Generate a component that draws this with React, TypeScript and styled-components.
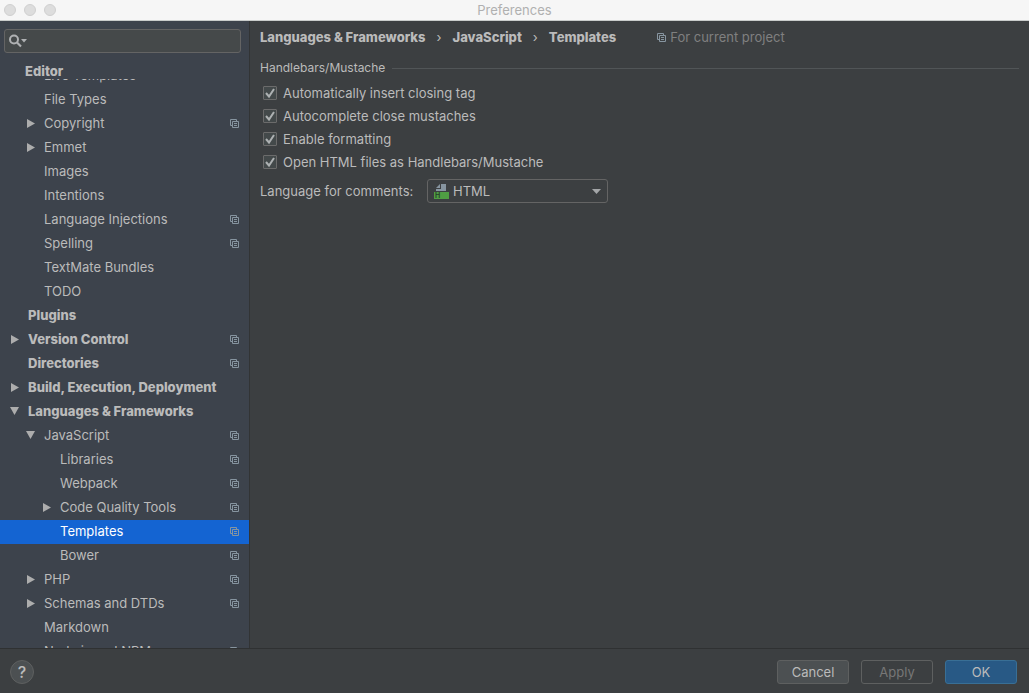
import React from "react";
import styled, { createGlobalStyle, css } from "styled-components";

const GlobalStyle = createGlobalStyle`
  *, *::before, *::after { box-sizing: border-box; }
  body { margin: 0; background: #3c3f41; }
  body, button, input, select {
    font-family: Inter, Roboto, "Liberation Sans", sans-serif;
    font-size: 13px;
    line-height: 16px;
    color: #bbbbbb;
  }
  button, input, select { margin: 0; padding: 0; }
`;

const Window = styled.div`
  display: flex;
  flex-direction: column;
  height: 100vh;
  background: #3c3f41;
`;

const TitleBar = styled.header`
  display: grid;
  grid-template-columns: 1fr auto 1fr;
  align-items: center;
  flex: none;
  height: 21px;
  padding: 0 4px;
  background: #f6f6f6;
  border-bottom: 1px solid #c9cccb;
`;

const WindowControls = styled.div`
  display: flex;
  gap: 8px;
`;

const WindowDot = styled.button`
  width: 12px;
  height: 12px;
  border: 1px solid #d0d0d0;
  border-radius: 50%;
  background: #dddddd;
`;

const WindowTitle = styled.h1`
  margin: 0;
  font-size: 13px;
  font-weight: 400;
  color: #b0b0b0;
`;

const Body = styled.div`
  display: flex;
  flex: 1;
  min-height: 0;
`;

const Sidebar = styled.nav`
  display: flex;
  flex-direction: column;
  flex: none;
  width: 250px;
  background: #3d434c;
  border-right: 1px solid #323435;
`;

const SearchBox = styled.div`
  display: flex;
  align-items: center;
  gap: 4px;
  flex: none;
  height: 24px;
  margin: 8px 8px 0 4px;
  padding: 0 4px;
  background: #45494a;
  border: 1px solid #646464;
  border-radius: 3px;
`;

const SearchInput = styled.input`
  flex: 1;
  min-width: 0;
  border: 0;
  outline: 0;
  background: transparent;
`;

const StickyGroup = styled.div`
  flex: none;
  height: 26px;
  padding: 10px 0 0 25px;
  font-weight: 800;
`;

const TreeViewport = styled.div`
  flex: 1;
  min-height: 0;
  overflow: hidden;
`;

const TreeList = styled.ul`
  margin: -15px 0 0;
  padding: 0;
  list-style: none;
`;

const TreeRow = styled.button<{ $level: number; $selected?: boolean }>`
  display: flex;
  align-items: center;
  width: 100%;
  height: 24px;
  padding: 0 10px 2px ${(p) => 8 + p.$level * 16}px;
  border: 0;
  background: transparent;
  text-align: left;
  font-weight: ${(p) => (p.$level === 0 ? 800 : 400)};
  ${(p) =>
    p.$selected &&
    css`
      background: #1464d2;
      color: #ffffff;
    `}
`;

const ArrowSlot = styled.span`
  display: flex;
  align-items: center;
  justify-content: center;
  flex: none;
  width: 13px;
  margin-right: 7px;
`;

const RowLabel = styled.span`
  flex: 1;
  white-space: nowrap;
`;

const Content = styled.main`
  flex: 1;
  min-width: 0;
  padding: 8px 10px;
`;

const Breadcrumbs = styled.div`
  display: flex;
  align-items: center;
  height: 16px;
  font-weight: 800;
  white-space: nowrap;
`;

const Separator = styled.span`
  width: 27px;
  text-align: center;
  font-weight: 400;
`;

const Scope = styled.span`
  display: flex;
  align-items: center;
  gap: 4px;
  margin-left: 41px;
  font-weight: 400;
  color: #808080;
`;

const Group = styled.fieldset`
  min-width: 0;
  margin: 0;
  padding: 0;
  border: 0;
`;

const GroupTitle = styled.legend`
  display: flex;
  align-items: center;
  gap: 7px;
  width: 100%;
  padding: 15px 0 5px;
  font-size: 12px;
  line-height: 16px;

  &::after {
    content: "";
    flex: 1;
    height: 1px;
    background: #515557;
  }
`;

const CheckRow = styled.label`
  display: flex;
  align-items: center;
  gap: 6px;
  width: max-content;
  height: 23px;
  padding-left: 3px;
`;

const CheckMark = styled.span`
  display: grid;
  place-items: center;

  > * { grid-area: 1 / 1; }
  svg { pointer-events: none; visibility: hidden; }
  input:checked + svg { visibility: visible; }
`;

const CheckInput = styled.input`
  appearance: none;
  width: 14px;
  height: 14px;
  background: #43494a;
  border: 1px solid #6b6b6b;
  border-radius: 1px;
`;

const FieldRow = styled.div`
  display: flex;
  align-items: center;
  margin-top: 6px;
`;

const FieldLabel = styled.label`
  width: 167px;
`;

const SelectBox = styled.div`
  display: grid;
  align-items: center;
  width: 181px;

  > * { grid-area: 1 / 1; }
  svg { pointer-events: none; z-index: 1; }
`;

const Select = styled.select`
  appearance: none;
  width: 100%;
  height: 24px;
  padding: 0 24px 0 25px;
  background: #3c3f41;
  border: 1px solid #646464;
  border-radius: 3px;
`;

const StartIcon = styled.svg`
  justify-self: start;
  margin-left: 7px;
`;

const EndIcon = styled.svg`
  justify-self: end;
  margin-right: 7px;
`;

const Footer = styled.footer`
  display: flex;
  align-items: center;
  gap: 12px;
  flex: none;
  height: 45px;
  padding: 2px 12px 0 10px;
  border-top: 1px solid #2f3132;
`;

const HelpButton = styled.button`
  width: 24px;
  height: 24px;
  margin-right: auto;
  border: 1px solid #5e6060;
  border-radius: 50%;
  background: #4c5052;
  font-size: 16px;
  font-weight: 500;
`;

const DialogButton = styled.button<{ $kind?: "default" | "primary" }>`
  width: 72px;
  height: 24px;
  border: 1px solid ${(p) => (p.$kind === "primary" ? "#396f95" : "#5e6060")};
  border-radius: 3px;
  background: ${(p) => (p.$kind === "primary" ? "#285985" : "#4c5052")};

  &:disabled {
    background: transparent;
    color: #777777;
  }
`;

function CopyIcon() {
  return (
    <svg width="9" height="9" viewBox="0 0 9 9" fill="none" stroke="#8795a0" aria-hidden="true">
      <path d="M2.5 6.5H.5V.5h6v2" />
      <path d="M2.5 2.5h6v6h-6z" />
      <path d="M4 4.5h3M4 6.5h3" />
    </svg>
  );
}

function Arrow({ open }: { open: boolean }) {
  return open ? (
    <svg width="9" height="8" viewBox="0 0 9 8" fill="#adadad" aria-hidden="true">
      <path d="M0 0h9L4.500 8z" />
    </svg>
  ) : (
    <svg width="8" height="9" viewBox="0 0 8 9" fill="#adadad" aria-hidden="true">
      <path d="M0 0v9l8-4.500z" />
    </svg>
  );
}

type Item = { label: string; level: number; arrow?: "open" | "closed"; project?: boolean; selected?: boolean };

const items: Item[] = [
  { label: "Live Templates", level: 1 },
  { label: "File Types", level: 1 },
  { label: "Copyright", level: 1, arrow: "closed", project: true },
  { label: "Emmet", level: 1, arrow: "closed" },
  { label: "Images", level: 1 },
  { label: "Intentions", level: 1 },
  { label: "Language Injections", level: 1, project: true },
  { label: "Spelling", level: 1, project: true },
  { label: "TextMate Bundles", level: 1 },
  { label: "TODO", level: 1 },
  { label: "Plugins", level: 0 },
  { label: "Version Control", level: 0, arrow: "closed", project: true },
  { label: "Directories", level: 0, project: true },
  { label: "Build, Execution, Deployment", level: 0, arrow: "closed" },
  { label: "Languages & Frameworks", level: 0, arrow: "open" },
  { label: "JavaScript", level: 1, arrow: "open", project: true },
  { label: "Libraries", level: 2, project: true },
  { label: "Webpack", level: 2, project: true },
  { label: "Code Quality Tools", level: 2, arrow: "closed", project: true },
  { label: "Templates", level: 2, project: true, selected: true },
  { label: "Bower", level: 2, project: true },
  { label: "PHP", level: 1, arrow: "closed", project: true },
  { label: "Schemas and DTDs", level: 1, arrow: "closed", project: true },
  { label: "Markdown", level: 1 },
  { label: "Node.js and NPM", level: 1, project: true },
];

const options = [
  "Automatically insert closing tag",
  "Autocomplete close mustaches",
  "Enable formatting",
  "Open HTML files as Handlebars/Mustache",
];

export default function App() {
  return (
    <>
      <GlobalStyle />
      <Window>
        <TitleBar>
          <WindowControls>
            <WindowDot aria-label="Close" />
            <WindowDot aria-label="Minimize" />
            <WindowDot aria-label="Zoom" />
          </WindowControls>
          <WindowTitle>Preferences</WindowTitle>
        </TitleBar>
        <Body>
          <Sidebar>
            <SearchBox>
              <svg width="19" height="14" viewBox="0 0 19 14" fill="none" aria-hidden="true">
                <circle cx="5" cy="5.500" r="4" stroke="#afb1b3" strokeWidth="2" />
                <path d="M8 8.500l4 4" stroke="#afb1b3" strokeWidth="2.200" />
                <path d="M12 5h6l-3 3.500z" fill="#afb1b3" />
              </svg>
              <SearchInput type="text" aria-label="Search settings" />
            </SearchBox>
            <StickyGroup>Editor</StickyGroup>
            <TreeViewport>
              <TreeList>
                {items.map((item) => (
                  <li key={item.label}>
                    <TreeRow
                      $level={item.level}
                      $selected={item.selected}
                      aria-expanded={item.arrow ? item.arrow === "open" : undefined}
                    >
                      <ArrowSlot>{item.arrow && <Arrow open={item.arrow === "open"} />}</ArrowSlot>
                      <RowLabel>{item.label}</RowLabel>
                      {item.project && <CopyIcon />}
                    </TreeRow>
                  </li>
                ))}
              </TreeList>
            </TreeViewport>
          </Sidebar>
          <Content>
            <Breadcrumbs>
              <span>Languages &amp; Frameworks</span>
              <Separator>›</Separator>
              <span>JavaScript</span>
              <Separator>›</Separator>
              <span>Templates</span>
              <Scope>
                <CopyIcon />
                For current project
              </Scope>
            </Breadcrumbs>
            <Group>
              <GroupTitle>Handlebars/Mustache</GroupTitle>
              {options.map((label) => (
                <CheckRow key={label}>
                  <CheckMark>
                    <CheckInput type="checkbox" defaultChecked />
                    <svg width="14" height="14" viewBox="0 0 14 14" fill="none" aria-hidden="true">
                      <path d="M3 7l3 3.500L11 3" stroke="#adb1b2" strokeWidth="2" />
                    </svg>
                  </CheckMark>
                  {label}
                </CheckRow>
              ))}
              <FieldRow>
                <FieldLabel htmlFor="comment-language">Language for comments:</FieldLabel>
                <SelectBox>
                  <Select id="comment-language" defaultValue="HTML">
                    <option>HTML</option>
                  </Select>
                  <StartIcon width="15" height="15" viewBox="0 0 15 15" aria-hidden="true">
                    <path d="M7 0h5v7H2V5h5z" fill="#8795a0" />
                    <path d="M6 0v4H2z" fill="#8795a0" />
                    <path d="M0 8h15v7H0z" fill="#4f9e43" />
                    <text x="1" y="14" fontSize="7" fontWeight="600" fill="#26402a">
                      H
                    </text>
                  </StartIcon>
                  <EndIcon width="9" height="5" viewBox="0 0 9 5" aria-hidden="true">
                    <path d="M0 0h9L4.500 5z" fill="#a4a6a8" />
                  </EndIcon>
                </SelectBox>
              </FieldRow>
            </Group>
          </Content>
        </Body>
        <Footer>
          <HelpButton aria-label="Help">?</HelpButton>
          <DialogButton>Cancel</DialogButton>
          <DialogButton disabled>Apply</DialogButton>
          <DialogButton $kind="primary">OK</DialogButton>
        </Footer>
      </Window>
    </>
  );
}
